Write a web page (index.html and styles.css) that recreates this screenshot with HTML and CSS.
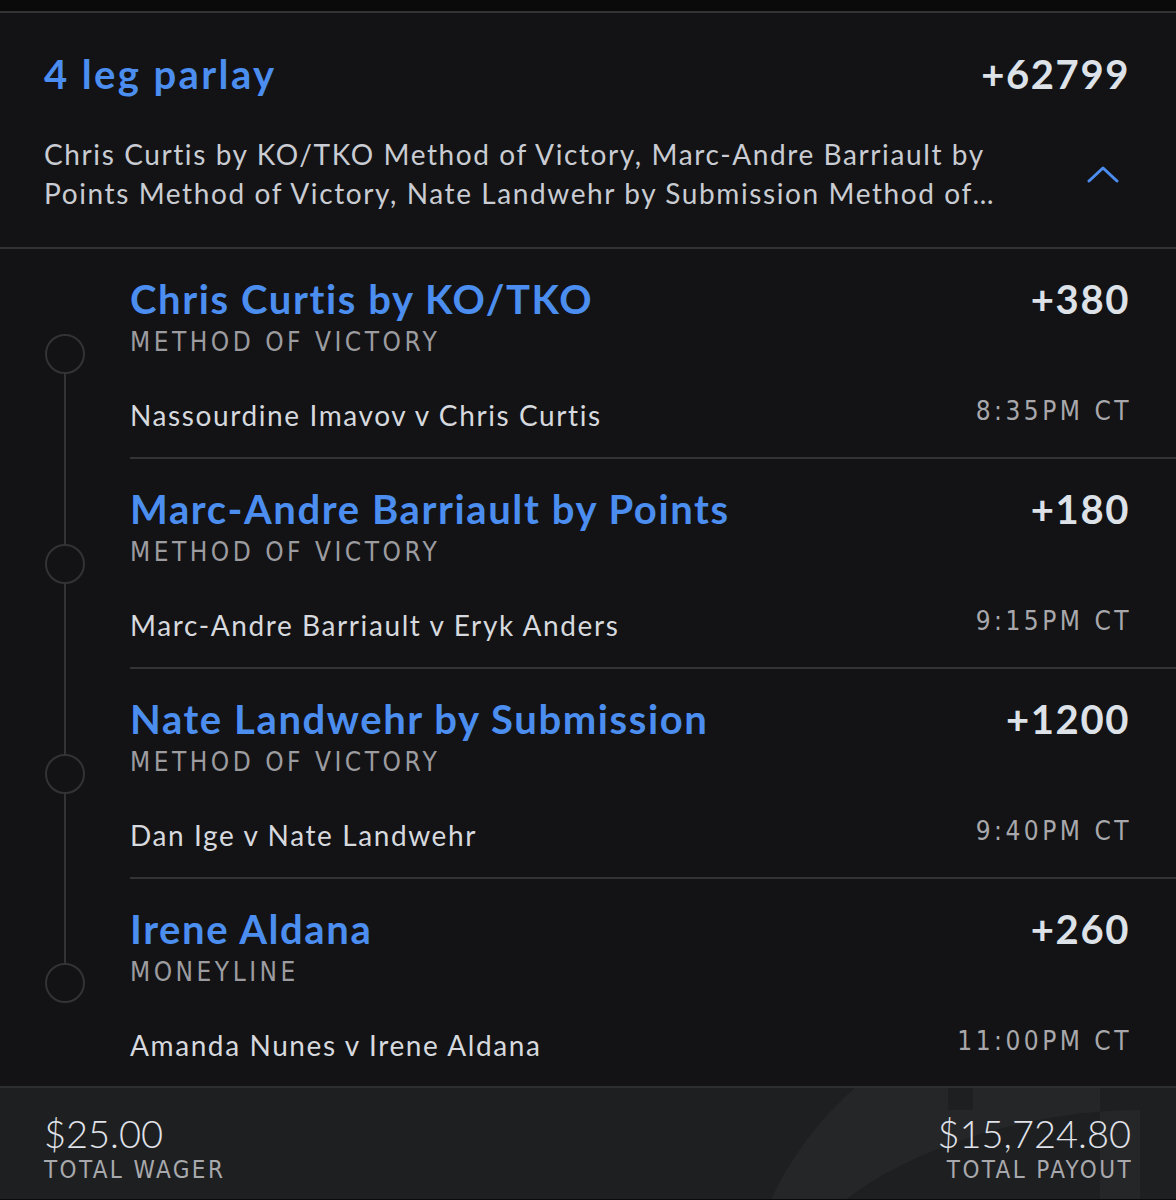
FILE: index.html
```html
<!DOCTYPE html>
<html>
    <head>
        <link rel="stylesheet" href="styles.css">
    </head>
    <body>
        <div class="topbar"></div>
        <div class="slip">
            <div class="slip-head">
                <div class="head-row">
                    <h1 class="parlay">4 leg parlay</h1>
                    <div class="odds">+62799</div>
                </div>
                <div class="desc-row">
                    <p class="desc">Chris Curtis by KO/TKO Method of Victory, Marc-Andre Barriault by Points Method of Victory, Nate Landwehr by Submission Method of Victory, Irene Aldana Moneyline</p>
                    <svg class="chevron" width="32" height="20" viewBox="0 0 32 20">
                        <path d="M2 17 L16 4 L30 17" fill="none" stroke="#4b8ef0" stroke-width="3" stroke-linecap="round" stroke-linejoin="round"/>
                    </svg>
                </div>
            </div>

            <div class="legs">
                <div class="leg first">
                    <div class="track">
                        <div class="seg"></div>
                        <div class="dot"></div>
                        <div class="seg"></div>
                    </div>
                    <div class="leg-body">
                        <div class="leg-top">
                            <div>
                                <h2 class="pick">Chris Curtis by KO/TKO</h2>
                                <div class="market">Method of Victory</div>
                            </div>
                            <div class="odds">+380</div>
                        </div>
                        <div class="leg-bottom">
                            <span class="match">Nassourdine Imavov v Chris Curtis</span>
                            <span class="time">8:35PM CT</span>
                        </div>
                    </div>
                </div>

                <div class="leg">
                    <div class="track">
                        <div class="seg"></div>
                        <div class="dot"></div>
                        <div class="seg"></div>
                    </div>
                    <div class="leg-body">
                        <div class="leg-top">
                            <div>
                                <h2 class="pick">Marc-Andre Barriault by Points</h2>
                                <div class="market">Method of Victory</div>
                            </div>
                            <div class="odds">+180</div>
                        </div>
                        <div class="leg-bottom">
                            <span class="match">Marc-Andre Barriault v Eryk Anders</span>
                            <span class="time">9:15PM CT</span>
                        </div>
                    </div>
                </div>

                <div class="leg">
                    <div class="track">
                        <div class="seg"></div>
                        <div class="dot"></div>
                        <div class="seg"></div>
                    </div>
                    <div class="leg-body">
                        <div class="leg-top">
                            <div>
                                <h2 class="pick">Nate Landwehr by Submission</h2>
                                <div class="market">Method of Victory</div>
                            </div>
                            <div class="odds">+1200</div>
                        </div>
                        <div class="leg-bottom">
                            <span class="match">Dan Ige v Nate Landwehr</span>
                            <span class="time">9:40PM CT</span>
                        </div>
                    </div>
                </div>

                <div class="leg last">
                    <div class="track">
                        <div class="seg"></div>
                        <div class="dot"></div>
                        <div class="seg"></div>
                    </div>
                    <div class="leg-body">
                        <div class="leg-top">
                            <div>
                                <h2 class="pick">Irene Aldana</h2>
                                <div class="market">Moneyline</div>
                            </div>
                            <div class="odds">+260</div>
                        </div>
                        <div class="leg-bottom">
                            <span class="match">Amanda Nunes v Irene Aldana</span>
                            <span class="time">11:00PM CT</span>
                        </div>
                    </div>
                </div>
            </div>

            <div class="totals">
                <svg class="watermark" width="430" height="114" viewBox="0 0 430 114">
                    <path d="M0 114 C20 70 50 30 85 0 L178 0 L178 22 L203 22 L203 0 L330 0 L330 114 L370 114 L370 22 C260 22 140 60 73 114 Z" fill="#252628"/>
                </svg>
                <div class="total">
                    <div class="amount">$25.00</div>
                    <div class="label">Total Wager</div>
                </div>
                <div class="total right">
                    <div class="amount">$15,724.80</div>
                    <div class="label">Total Payout</div>
                </div>
            </div>
        </div>
    </body>
</html>
```

FILE: styles.css
```css
body{
    margin: 0;
    background-color: #0a0a0a;
    font-family: Lato, "Open Sans", sans-serif;
    color: #d6d9de;
}
.topbar{
    height: 11px;
    background-color: #0a0a0a;
}
.slip{
    background-color: #131315;
    border-top: 2px solid #333336;
}
.slip-head{
    padding: 37px 46px 34px 44px;
    border-bottom: 2px solid #333336;
}
.head-row{
    display: flex;
    justify-content: space-between;
    align-items: center;
}
.parlay, .pick{
    margin: 0;
    font-size: 40px;
    line-height: 48px;
    font-weight: 700;
    letter-spacing: 1.6px;
    color: #4b8ef0;
}
.parlay{
    letter-spacing: 2.4px;
}
.odds{
    font-size: 40px;
    line-height: 48px;
    font-weight: 700;
    letter-spacing: 1.6px;
    color: #dde1e8;
}
.desc-row{
    display: flex;
    align-items: center;
    margin-top: 37px;
}
.desc{
    flex: 1;
    margin: 0;
    padding-right: 36px;
    font-size: 28px;
    line-height: 39px;
    letter-spacing: 1.6px;
    color: #c9ccd2;
    display: -webkit-box;
    -webkit-line-clamp: 2;
    -webkit-box-orient: vertical;
    overflow: hidden;
}
.chevron{
    margin-right: 11px;
}
.leg{
    display: flex;
    height: 210px;
}
.leg.last{
    height: 207px;
}
.track{
    width: 130px;
    display: flex;
    flex-direction: column;
    align-items: center;
}
.seg{
    flex: 1;
    width: 2px;
    background-color: #333336;
}
.first .seg:first-child, .last .seg:last-child{
    background-color: transparent;
}
.dot{
    width: 36px;
    height: 36px;
    border: 2px solid #333336;
    border-radius: 50%;
}
.leg-body{
    flex: 1;
    padding: 26px 46px 0 0;
    border-bottom: 2px solid #333336;
}
.last .leg-body{
    border-bottom: none;
}
.leg-top{
    display: flex;
    justify-content: space-between;
    align-items: flex-start;
}
.market, .label, .time{
    font-family: "Liberation Sans Narrow", "DejaVu Sans Condensed", sans-serif;
    text-transform: uppercase;
    letter-spacing: 3.5px;
}
.market{
    margin-top: 4px;
    font-size: 26px;
    line-height: 30px;
    color: #9c9ca0;
}
.leg-bottom{
    display: flex;
    justify-content: space-between;
    align-items: center;
    margin-top: 39px;
}
.match{
    font-size: 28px;
    line-height: 34px;
    letter-spacing: 1.6px;
    color: #d6d9de;
}
.time{
    font-size: 26px;
    color: #a8a8ac;
    margin-bottom: 8px;
    margin-right: -2px;
}
.totals{
    position: relative;
    overflow: hidden;
    display: flex;
    justify-content: space-between;
    padding: 23px 45px 14px 44px;
    background-color: #1e1f21;
    border-top: 2px solid #2e2f31;
}
.watermark{
    position: absolute;
    left: 770px;
    top: 0;
}
.total{
    position: relative;
}
.right{
    text-align: right;
}
.amount{
    font-size: 38px;
    line-height: 44px;
    font-weight: 300;
    color: #e0e3ea;
}
.label{
    font-size: 24px;
    line-height: 30px;
    letter-spacing: 2.4px;
    color: #a8a9ad;
}
.right .label{
    margin-right: -2px;
}
```
